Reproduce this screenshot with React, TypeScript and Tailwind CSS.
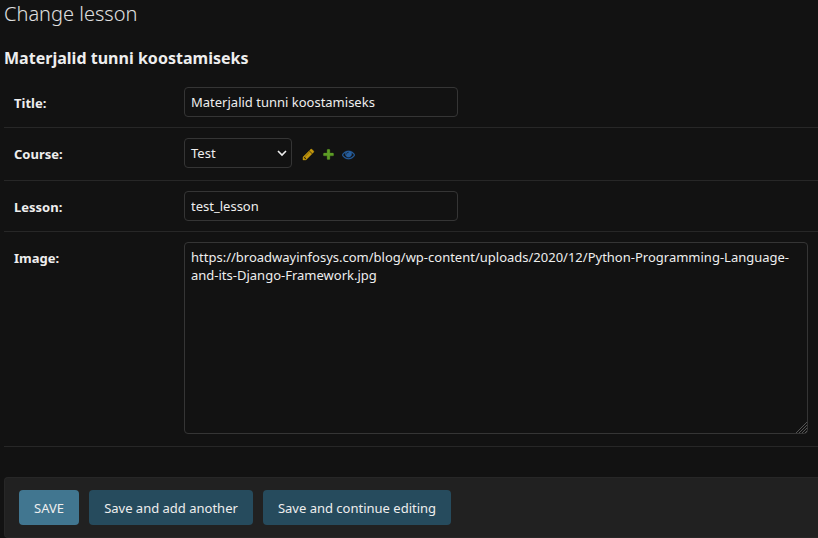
import type { ReactNode } from "react";

const field =
  "block rounded-[4px] border border-[#353535] bg-[#121212] text-[13px] text-[#eeeeee] outline-none";

function Row({ label, height, children }: { label: string; height: string; children: ReactNode }) {
  return (
    <div className={`flex items-start border-b border-[#272727] px-[10px] pt-[10px] ${height}`}>
      <label className="w-[170px] shrink-0 pt-[7px] text-[13px] leading-[18px] font-bold">{label}</label>
      {children}
    </div>
  );
}

function Icon({ d, color, className }: { d: string; color: string; className: string }) {
  return (
    <svg
      viewBox="0 0 1792 1792"
      className={`h-[13px] w-[13px] shrink-0 opacity-80 ${className}`}
      fill={color}
      stroke={color}
      strokeWidth="40"
    >
      <path d={d} />
    </svg>
  );
}

export default function App() {
  return (
    <main className="h-[538px] w-full overflow-hidden bg-[#121212] pl-[4px] font-['Noto_Sans',sans-serif] text-[#eeeeee]">
      <h1 className="h-[48px] text-[20px] leading-[28px] font-light text-[#e0e0e0]">Change lesson</h1>
      <h2 className="h-[29px] text-[16px] leading-[20px] font-bold tracking-[0.02px]">Materjalid tunni koostamiseks</h2>

      <Row label="Title:" height="h-[51px]">
        <input className={`${field} h-[30px] w-[274px] px-[6px]`} defaultValue="Materjalid tunni koostamiseks" />
      </Row>
      <Row label="Course:" height="h-[53px]">
        <div className={`${field} flex h-[30px] w-[108px] items-center justify-between pr-[4px] pl-[6px]`}>
          <span className="leading-[18px]">Test</span>
          <svg viewBox="0 0 10 7" className="mt-px h-[7px] w-[10px]" fill="none" stroke="#eeeeee" strokeWidth="1.6">
            <path d="M1 1l4 4 4-4" />
          </svg>
        </div>
        <Icon
          className="mt-[10px] ml-[10px]"
          color="#efb80b"
          d="M491 1536l91-91-235-235-91 91v107h128v128h107zm523-928q0-22-22-22-10 0-17 7l-542 542q-7 7-7 17 0 22 22 22 10 0 17-7l542-542q7-7 7-17zm-54-192l416 416-832 832h-416v-416zm683 96q0 53-37 90l-166 166-416-416 166-165q36-38 90-38 53 0 91 38l235 234q37 39 37 91z"
        />
        <Icon
          className="mt-[10px] ml-[7px]"
          color="#70bf2b"
          d="M1600 796v192q0 40-28 68t-68 28h-416v416q0 40-28 68t-68 28h-192q-40 0-68-28t-28-68v-416h-416q-40 0-68-28t-28-68v-192q0-40 28-68t68-28h416v-416q0-40 28-68t68-28h192q40 0 68 28t28 68v416h416q40 0 68 28t28 68z"
        />
        <Icon
          className="mt-[10px] ml-[7px]"
          color="#2b70bf"
          d="M1664 960q-152-236-381-353 61 104 61 225 0 185-131.5 316.5t-316.5 131.5-316.5-131.5-131.5-316.5q0-121 61-225-229 117-381 353 133 205 333.5 326.5t434.5 121.5 434.5-121.5 333.5-326.5zm-720-384q0-20-14-34t-34-14q-125 0-214.5 89.5t-89.5 214.5q0 20 14 34t34 14 34-14 14-34q0-86 61-147t147-61q20 0 34-14t14-34zm848 384q0 34-20 69-140 230-376.5 368.5t-499.5 138.5-499.5-139-376.5-368q-20-35-20-69t20-69q140-229 376.5-368t499.5-139 499.5 139 376.5 368q20 35 20 69z"
        />
      </Row>
      <Row label="Lesson:" height="h-[51px]">
        <input className={`${field} h-[30px] w-[274px] px-[6px]`} defaultValue="test_lesson" />
      </Row>
      <Row label="Image:" height="h-[215px]">
        <div className="relative">
          <textarea
            className={`${field} h-[192px] w-[624px] resize-none px-[6px] py-[5px] leading-[18px]`}
            defaultValue="https://broadwayinfosys.com/blog/wp-content/uploads/2020/12/Python-Programming-Language-and-its-Django-Framework.jpg"
          />
          {/* Resize grip */}
          <svg
            viewBox="0 0 11 11"
            className="pointer-events-none absolute right-px bottom-px h-[11px] w-[11px]"
            fill="none"
            stroke="#666666"
            strokeWidth="0.8"
          >
            <path d="M0 11L11 0M3 11L11 3M6 11L11 6M9 11L11 9" />
          </svg>
        </div>
      </Row>

      <div className="mt-[30px] flex h-[61px] gap-[10px] rounded-l-[4px] border border-r-0 border-[#272727] bg-[#212121] px-[14px] py-[12px] text-[13px] text-[#eeeeee]">
        <button className="h-[35px] w-[60px] rounded-[4px] bg-[#417690] pt-[2px]">SAVE</button>
        <button className="h-[35px] w-[164px] rounded-[4px] bg-[#264b5d] pt-[2px]">Save and add another</button>
        <button className="h-[35px] w-[188px] rounded-[4px] bg-[#264b5d] pt-[2px]">Save and continue editing</button>
      </div>
    </main>
  );
}
